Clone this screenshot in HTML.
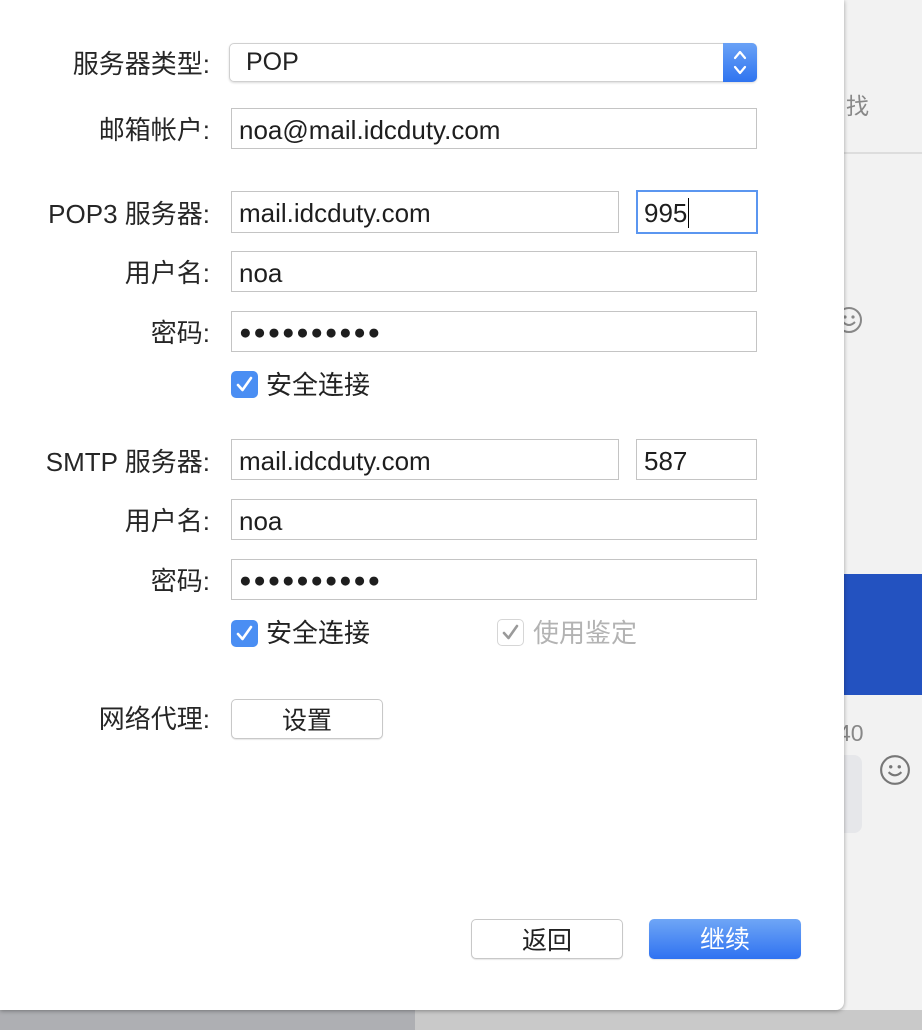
<!DOCTYPE html><html><head><meta charset="utf-8"><style>
*{box-sizing:border-box;margin:0;padding:0}
body{width:922px;height:1030px;position:relative;overflow:hidden;background:#f2f2f2;font-family:"Liberation Sans","Noto Sans CJK SC",sans-serif;color:#222}
.a{position:absolute}
.dlg{left:0;top:0;width:844px;height:1010px;background:#fff;border-bottom-right-radius:8px;box-shadow:0 1px 4px rgba(0,0,0,.35)}
.lbl{position:absolute;right:712px;font-size:26px;color:#262626;white-space:nowrap;line-height:1}
.f{position:absolute;border:1px solid #c4c4c4;background:#fff;font-size:26px;padding-left:7px;padding-top:2px;line-height:38px;color:#1e1e1e;white-space:nowrap}
.cb{position:absolute;width:27px;height:27px;border-radius:5px;background:#4a8ef3}
.cb svg{position:absolute;left:0;top:0}
.ct{position:absolute;font-size:26px;line-height:1}
.btn{position:absolute;border:1px solid #c8c8c8;border-radius:5px;background:#fff;font-size:25px;text-align:center;line-height:38px;padding-top:2px;box-shadow:0 1px 1px rgba(0,0,0,.1)}
.dots{letter-spacing:1.6px;font-size:21px}
</style></head><body>
<div class="a" style="left:844px;top:152px;width:78px;height:2px;background:#ddd"></div>
<div class="a" style="left:844px;top:574px;width:78px;height:121px;background:#2352c0"></div>
<div class="a" style="left:846px;top:87px;font-size:23px;color:#888">找</div>
<svg class="a" style="left:834px;top:305px" width="30" height="30" viewBox="0 0 30 30"><circle cx="15" cy="15" r="12" fill="none" stroke="#888" stroke-width="2"/><circle cx="11" cy="12" r="1.6" fill="#888"/><circle cx="19" cy="12" r="1.6" fill="#888"/><path d="M9 17q6 6 12 0" fill="none" stroke="#888" stroke-width="2"/></svg>
<div class="a" style="left:838px;top:720px;font-size:23px;color:#888">40</div>
<div class="a" style="left:820px;top:755px;width:42px;height:78px;border-radius:8px;background:#e6e7ea"></div>
<svg class="a" style="left:879px;top:754px" width="32" height="32" viewBox="0 0 30 30"><circle cx="15" cy="15" r="13" fill="none" stroke="#777" stroke-width="2"/><circle cx="11" cy="12" r="1.6" fill="#777"/><circle cx="19" cy="12" r="1.6" fill="#777"/><path d="M9 17q6 6 12 0" fill="none" stroke="#777" stroke-width="2"/></svg>
<div class="a" style="left:0;top:1010px;width:415px;height:20px;background:#aeafb3"></div>
<div class="a" style="left:415px;top:1010px;width:507px;height:20px;background:#c9c9c9"></div>
<div class="a dlg"></div>

<div class="lbl" style="top:51px">服务器类型:</div>
<div class="a" style="left:229px;top:43px;width:528px;height:39px;border:1px solid #d0d0d0;border-radius:5px;box-shadow:0 1px 2px rgba(0,0,0,.15);font-size:25px;line-height:37px;padding-left:16px">POP</div>
<div class="a" style="left:723px;top:43px;width:34px;height:39px;background:linear-gradient(#6aa2f6,#2f74f0);border-radius:0 5px 5px 0"><svg width="34" height="39"><path d="M12 15l5-6 5 6M12 24l5 6 5-6" fill="none" stroke="#fff" stroke-width="2.2" stroke-linecap="round" stroke-linejoin="round"/></svg></div>

<div class="lbl" style="top:117px">邮箱帐户:</div>
<div class="f" style="left:231px;top:108px;width:526px;height:41px">noa@mail.idcduty.com</div>

<div class="lbl" style="top:201px">POP3 服务器:</div>
<div class="f" style="left:231px;top:191px;width:388px;height:42px">mail.idcduty.com</div>
<div class="f" style="left:636px;top:190px;width:122px;height:44px;border:2px solid #5b96f0;padding-left:6px">995<span style="border-left:1.5px solid #000;margin-left:1px"></span></div>

<div class="lbl" style="top:260px">用户名:</div>
<div class="f" style="left:231px;top:251px;width:526px;height:41px">noa</div>
<div class="lbl" style="top:320px">密码:</div>
<div class="f dots" style="left:231px;top:311px;width:526px;height:41px">●●●●●●●●●●</div>
<div class="cb" style="left:231px;top:371px"><svg width="27" height="27"><path d="M7 14l4.5 5L20 7" fill="none" stroke="#fff" stroke-width="2.6" stroke-linecap="round" stroke-linejoin="round"/></svg></div>
<div class="ct" style="left:266px;top:372px">安全连接</div>

<div class="lbl" style="top:449px">SMTP 服务器:</div>
<div class="f" style="left:231px;top:439px;width:388px;height:41px">mail.idcduty.com</div>
<div class="f" style="left:636px;top:439px;width:121px;height:41px">587</div>
<div class="lbl" style="top:508px">用户名:</div>
<div class="f" style="left:231px;top:499px;width:526px;height:41px">noa</div>
<div class="lbl" style="top:568px">密码:</div>
<div class="f dots" style="left:231px;top:559px;width:526px;height:41px">●●●●●●●●●●</div>
<div class="cb" style="left:231px;top:620px"><svg width="27" height="27"><path d="M7 14l4.5 5L20 7" fill="none" stroke="#fff" stroke-width="2.6" stroke-linecap="round" stroke-linejoin="round"/></svg></div>
<div class="ct" style="left:266px;top:620px">安全连接</div>
<div class="cb" style="left:497px;top:619px;background:#fff;border:1px solid #d6d6d6"><svg width="27" height="27" style="left:-1px;top:-1px"><path d="M7 14l4.5 5L20 7" fill="none" stroke="#9a9a9a" stroke-width="2.6" stroke-linecap="round" stroke-linejoin="round"/></svg></div>
<div class="ct" style="left:533px;top:620px;color:#b3b3b3">使用鉴定</div>

<div class="lbl" style="top:706px">网络代理:</div>
<div class="btn" style="left:231px;top:699px;width:152px;height:40px">设置</div>

<div class="btn" style="left:471px;top:919px;width:152px;height:40px">返回</div>
<div class="btn" style="left:649px;top:919px;width:152px;height:40px;border:none;background:linear-gradient(#6fa6f6,#2f72f1);color:#fff">继续</div>
</body></html>
